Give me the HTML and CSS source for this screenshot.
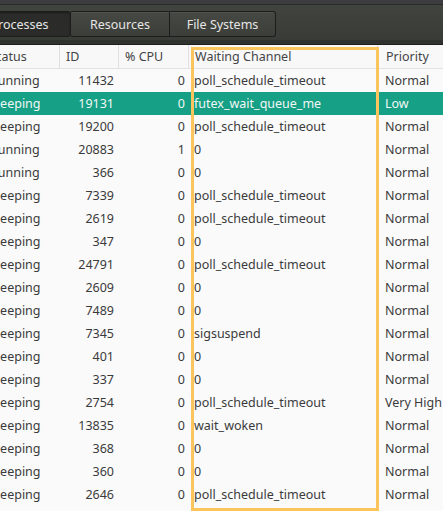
FILE: index.html
```html
<!DOCTYPE html>
<html>
<head>
<meta charset="utf-8">
<link rel="stylesheet" href="styles.css">
</head>
<body>
<div class="window">
  <div class="topstrip"></div>
  <div class="toolbar">
    <div class="tabs">
      <div class="tab active">Processes</div>
      <div class="tab">Resources</div>
      <div class="tab">File Systems</div>
    </div>
  </div>
  <div class="table">
    <div class="row head">
      <div class="c status">Status</div>
      <div class="c id">ID</div>
      <div class="c cpu">% CPU</div>
      <div class="c wchan">Waiting Channel</div>
      <div class="c prio">Priority</div>
    </div>
    <div class="row"><div class="c status">Running</div><div class="c id num">11432</div><div class="c cpu num">0</div><div class="c wchan">poll_schedule_timeout</div><div class="c prio">Normal</div></div>
    <div class="row sel"><div class="c status">Sleeping</div><div class="c id num">19131</div><div class="c cpu num">0</div><div class="c wchan">futex_wait_queue_me</div><div class="c prio">Low</div></div>
    <div class="row"><div class="c status">Sleeping</div><div class="c id num">19200</div><div class="c cpu num">0</div><div class="c wchan">poll_schedule_timeout</div><div class="c prio">Normal</div></div>
    <div class="row"><div class="c status">Running</div><div class="c id num">20883</div><div class="c cpu num">1</div><div class="c wchan">0</div><div class="c prio">Normal</div></div>
    <div class="row"><div class="c status">Running</div><div class="c id num">366</div><div class="c cpu num">0</div><div class="c wchan">0</div><div class="c prio">Normal</div></div>
    <div class="row"><div class="c status">Sleeping</div><div class="c id num">7339</div><div class="c cpu num">0</div><div class="c wchan">poll_schedule_timeout</div><div class="c prio">Normal</div></div>
    <div class="row"><div class="c status">Sleeping</div><div class="c id num">2619</div><div class="c cpu num">0</div><div class="c wchan">poll_schedule_timeout</div><div class="c prio">Normal</div></div>
    <div class="row"><div class="c status">Sleeping</div><div class="c id num">347</div><div class="c cpu num">0</div><div class="c wchan">0</div><div class="c prio">Normal</div></div>
    <div class="row"><div class="c status">Sleeping</div><div class="c id num">24791</div><div class="c cpu num">0</div><div class="c wchan">poll_schedule_timeout</div><div class="c prio">Normal</div></div>
    <div class="row"><div class="c status">Sleeping</div><div class="c id num">2609</div><div class="c cpu num">0</div><div class="c wchan">0</div><div class="c prio">Normal</div></div>
    <div class="row"><div class="c status">Sleeping</div><div class="c id num">7489</div><div class="c cpu num">0</div><div class="c wchan">0</div><div class="c prio">Normal</div></div>
    <div class="row"><div class="c status">Sleeping</div><div class="c id num">7345</div><div class="c cpu num">0</div><div class="c wchan">sigsuspend</div><div class="c prio">Normal</div></div>
    <div class="row"><div class="c status">Sleeping</div><div class="c id num">401</div><div class="c cpu num">0</div><div class="c wchan">0</div><div class="c prio">Normal</div></div>
    <div class="row"><div class="c status">Sleeping</div><div class="c id num">337</div><div class="c cpu num">0</div><div class="c wchan">0</div><div class="c prio">Normal</div></div>
    <div class="row"><div class="c status">Sleeping</div><div class="c id num">2754</div><div class="c cpu num">0</div><div class="c wchan">poll_schedule_timeout</div><div class="c prio">Very High</div></div>
    <div class="row"><div class="c status">Sleeping</div><div class="c id num">13835</div><div class="c cpu num">0</div><div class="c wchan">wait_woken</div><div class="c prio">Normal</div></div>
    <div class="row"><div class="c status">Sleeping</div><div class="c id num">368</div><div class="c cpu num">0</div><div class="c wchan">0</div><div class="c prio">Normal</div></div>
    <div class="row"><div class="c status">Sleeping</div><div class="c id num">360</div><div class="c cpu num">0</div><div class="c wchan">0</div><div class="c prio">Normal</div></div>
    <div class="row"><div class="c status">Sleeping</div><div class="c id num">2646</div><div class="c cpu num">0</div><div class="c wchan">poll_schedule_timeout</div><div class="c prio">Normal</div></div>
  </div>
  <div class="highlight-box"></div>
</div>
</body>
</html>
```

FILE: styles.css
```css
html, body {
  margin: 0;
  padding: 0;
  width: 443px;
  height: 511px;
  overflow: hidden;
  background: #fafafa;
}
.window {
  position: relative;
  width: 443px;
  height: 511px;
  overflow: hidden;
  font-family: "Noto Sans", "Open Sans", sans-serif;
  font-size: 12.5px;
}
.topstrip {
  height: 4px;
  background: #3d3d3f;
  border-bottom: 1px solid #2a2a2a;
}
.toolbar {
  height: 40px;
  background: linear-gradient(#42443f, #383a36);
  border-bottom: 1px solid #1e1f1d;
  box-shadow: inset 0 -4px 0 #30322f;
  display: flex;
  align-items: flex-start;
  padding-top: 6px;
  box-sizing: border-box;
}
.tabs {
  display: flex;
  margin-left: -31px;
}
.tab {
  height: 26px;
  line-height: 25px;
  box-sizing: border-box;
  padding: 0;
  white-space: nowrap;
  text-align: center;
  color: #e6e6e4;
  background: linear-gradient(#464843, #3c3e3a);
  border: 1px solid #1d1e1c;
  border-left: none;
  border-radius: 0 2px 2px 0;
  box-shadow: inset 0 1px 0 rgba(255,255,255,0.06);
}
.tab:nth-child(2) { width: 100px; border-left: 1px solid #1d1e1c; border-radius: 2px 0 0 2px; }
.tab:nth-child(3) { width: 106px; border-radius: 0 3px 3px 0; }
.tab.active {
  width: 101px;
  background: #2b2c2a;
  box-shadow: inset 0 1px 2px rgba(0,0,0,0.4);
  border-right: none;
}
.table {
  margin-left: -14px;
}
.row {
  display: grid;
  grid-template-columns: 73px 59px 70px 189px 80px;
  height: 23px;
  line-height: 23px;
  color: #3a3a3c;
}
.row.head {
  background: #f8f8f8;
  border-bottom: 1px solid #e2e2e2;
  height: 24px;
  box-sizing: border-box;
  line-height: 23px;
  color: #444446;
}
.row.head .c + .c {
  border-left: 1px solid #e0e0e0;
}
.c {
  white-space: nowrap;
  overflow: hidden;
  padding: 0 6px;
}
.c.status { padding-left: 4px; }
.c.num { text-align: right; padding-right: 4px; }
.c.cpu.num { padding-right: 3px; }
.c.wchan { padding-left: 6px; }
.c.prio { padding-left: 8px; }
.row.sel {
  background: #16a085;
  color: #f2f7f5;
}
.highlight-box {
  position: absolute;
  left: 191px;
  top: 47px;
  width: 188px;
  height: 464px;
  box-sizing: border-box;
  border: 3px solid #fcc45c;
}
```
